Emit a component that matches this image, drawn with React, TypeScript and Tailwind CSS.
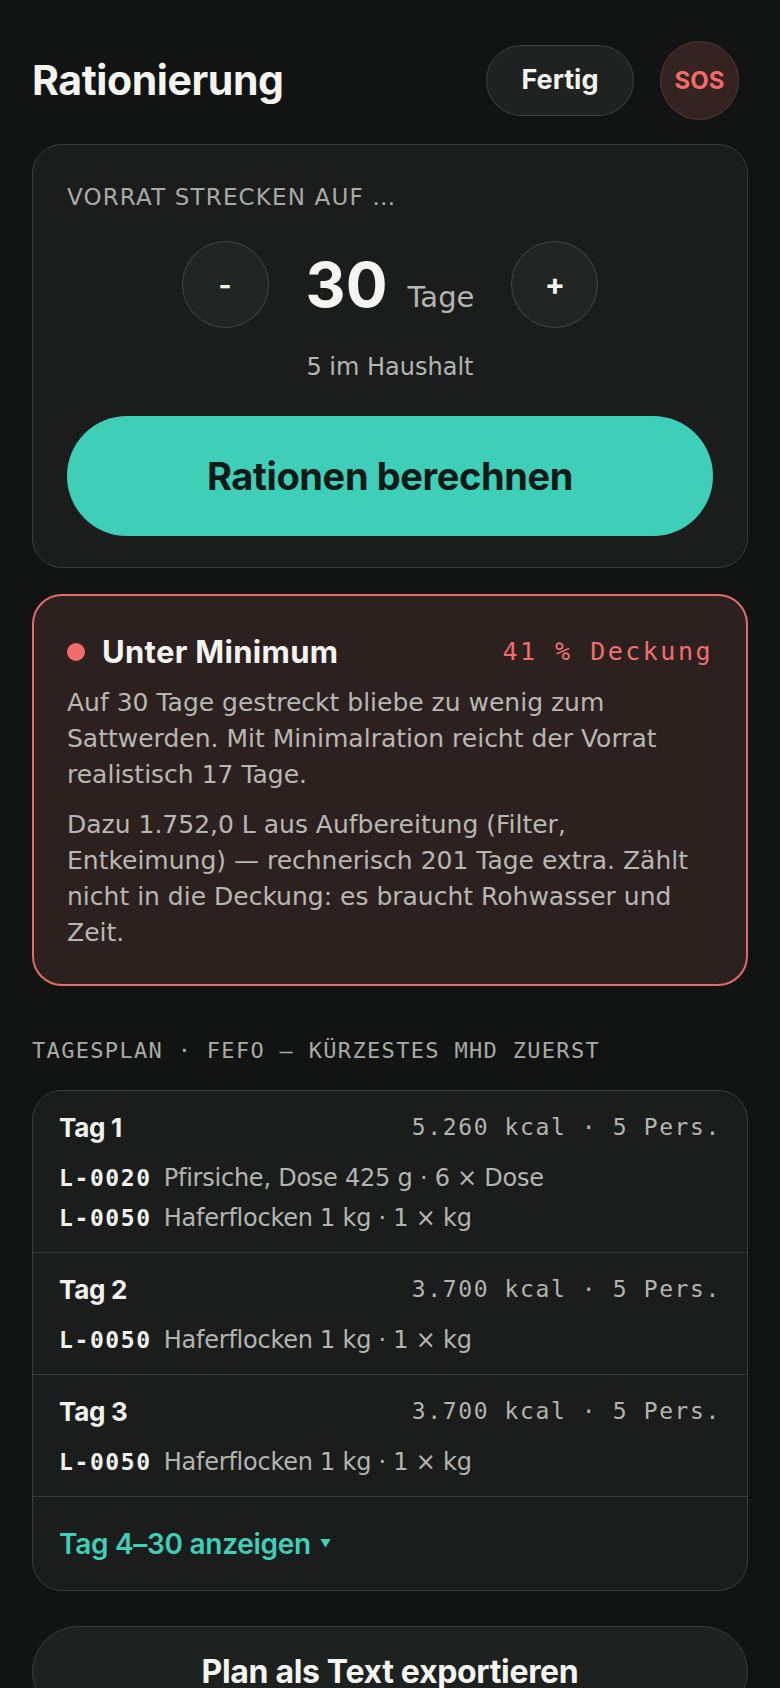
import { FC } from 'react';

const sans = "font-['Inter','Noto_Sans',sans-serif]";
const text = "font-['DejaVu_Sans','Noto_Sans',sans-serif]";
const mono = "font-['DejaVu_Sans_Mono','Liberation_Mono',monospace]";

type Item = { lot: string; name: string };
type Day = { label: string; kcal: string; items: Item[] };

const days: Day[] = [
    {
        label: 'Tag 1',
        kcal: '5.260 kcal · 5 Pers.',
        items: [
            { lot: 'L-0020', name: 'Pfirsiche, Dose 425 g · 6 × Dose' },
            { lot: 'L-0050', name: 'Haferflocken 1 kg · 1 × kg' },
        ],
    },
    {
        label: 'Tag 2',
        kcal: '3.700 kcal · 5 Pers.',
        items: [{ lot: 'L-0050', name: 'Haferflocken 1 kg · 1 × kg' }],
    },
    {
        label: 'Tag 3',
        kcal: '3.700 kcal · 5 Pers.',
        items: [{ lot: 'L-0050', name: 'Haferflocken 1 kg · 1 × kg' }],
    },
];

const DayRow: FC<{ day: Day }> = ({ day }) => (
    <div className="border-b border-[#3a3e3b] px-[26px] pb-[14px] pt-[20px]">
        <div className="flex h-[32px] items-center justify-between">
            <span className="text-[26px] font-bold tracking-[-0.01em] text-[#f2f2ee]">
                {day.label}
            </span>
            <span className={`${mono} text-[23px] tracking-[0.07em] text-[#b2b4af]`}>
                {day.kcal}
            </span>
        </div>
        <div className="mt-[15px] flex flex-col">
            {day.items.map((item, i) => (
                <div key={i} className="flex h-[40px] items-center gap-[12px]">
                    <span className={`${mono} text-[23px] font-bold tracking-[0.07em] text-[#f2f2ee]`}>
                        {item.lot}
                    </span>
                    <span className={`${text} text-[24px] tracking-[-0.01em] text-[#b3b5b0]`}>
                        {item.name}
                    </span>
                </div>
            ))}
        </div>
    </div>
);

export default function App() {
    return (
        <div className={`${sans} min-h-[1688px] w-full overflow-hidden bg-[#121413] px-[32px] pt-[41px]`}>
            {/* header */}
            <div className="flex items-center justify-between">
                <h1 className="text-[41px] font-bold tracking-[-0.01em] text-[#f4f4f0]">
                    Rationierung
                </h1>
                <div className="mr-[9px] flex items-center gap-[26px]">
                    <button className="flex h-[71px] w-[148px] items-center justify-center rounded-full border border-[#3f4340] bg-[#1e2220] text-[27px] font-bold text-[#f4f4f0]">
                        Fertig
                    </button>
                    <button className="flex size-[79px] items-center justify-center rounded-full border border-[#5a3636] bg-[#352322] text-[24px] font-bold text-[#f06a6a]">
                        SOS
                    </button>
                </div>
            </div>

            {/* stepper card */}
            <div className="mt-[24px] rounded-[30px] border border-[#3a3e3b] bg-[#1b1d1c] px-[34px] pb-[31px] pt-[34px]">
                <div className={`${text} text-[23px] uppercase leading-[36px] tracking-[0.05em] text-[#a8aaa5]`}>
                    Vorrat strecken auf …
                </div>
                <div className="mt-[26px] flex items-center justify-center gap-[37px]">
                    <button className="flex size-[87px] items-center justify-center rounded-full border border-[#454946] bg-[#212523] text-[28px] font-bold text-[#f4f4f0]">
                        -
                    </button>
                    <div className="flex items-baseline gap-[20px]">
                        <span className="text-[62px] font-bold leading-none text-[#f4f4f0]">30</span>
                        <span className={`${text} text-[29px] leading-none text-[#b3b5b0]`}>Tage</span>
                    </div>
                    <button className="flex size-[87px] items-center justify-center rounded-full border border-[#454946] bg-[#212523] text-[30px] font-bold text-[#f4f4f0]">
                        +
                    </button>
                </div>
                <div className={`${text} mt-[23px] text-center text-[24px] leading-[32px] text-[#b3b5b0]`}>
                    5 im Haushalt
                </div>
                <button className="mt-[33px] flex h-[120px] w-full items-center justify-center rounded-full bg-[#3fcfb9] text-[38px] font-bold tracking-[-0.01em] text-[#0f1a17]">
                    Rationen berechnen
                </button>
            </div>

            {/* alert */}
            <div className="mt-[26px] rounded-[30px] border-2 border-[#e26c6c] bg-[#2d2120] px-[33px] pb-[33px] pt-[38px]">
                <div className="flex h-[36px] items-center justify-between">
                    <div className="flex items-center gap-[17px]">
                        <span className="size-[18px] rounded-full bg-[#f06b6b]" />
                        <span className="text-[31px] font-bold tracking-[0.01em] text-[#f4f4f0]">
                            Unter Minimum
                        </span>
                    </div>
                    <span className={`${mono} text-[25px] tracking-[0.1em] text-[#ef6f6f]`}>
                        41 % Deckung
                    </span>
                </div>
                <p className={`${text} mt-[15px] text-[25px] leading-[36px] text-[#b6b8b2]`}>
                    Auf 30 Tage gestreckt bliebe zu wenig zum Sattwerden. Mit Minimalration
                    reicht der Vorrat realistisch 17 Tage.
                </p>
                <p className={`${text} mt-[14px] text-[25px] leading-[36px] text-[#b6b8b2]`}>
                    Dazu 1.752,0 L aus Aufbereitung (Filter, Entkeimung) — rechnerisch 201
                    Tage extra. Zählt nicht in die Deckung: es braucht Rohwasser und Zeit.
                </p>
            </div>

            {/* plan */}
            <div className={`${mono} mt-[52px] text-[22px] uppercase leading-[26px] tracking-[0.06em] text-[#a8aaa5]`}>
                Tagesplan · FEFO — kürzestes MHD zuerst
            </div>
            <div className="mt-[26px] overflow-hidden rounded-[30px] border border-[#3a3e3b] bg-[#1b1d1c]">
                {days.map((d) => (
                    <DayRow key={d.label} day={d} />
                ))}
                <div className="flex h-[93px] items-center px-[26px]">
                    <span className="text-[28px] font-semibold tracking-[-0.01em] text-[#3fcfb9]">
                        Tag 4–30 anzeigen
                    </span>
                    <span className="ml-[9px] text-[11px] text-[#3fcfb9]">▼</span>
                </div>
            </div>

            <button className="mt-[35px] flex h-[92px] w-full items-center justify-center rounded-full border border-[#3a3e3b] bg-[#1d211f] text-[32px] font-bold tracking-[-0.01em] text-[#f4f4f0]">
                Plan als Text exportieren
            </button>
        </div>
    );
}
